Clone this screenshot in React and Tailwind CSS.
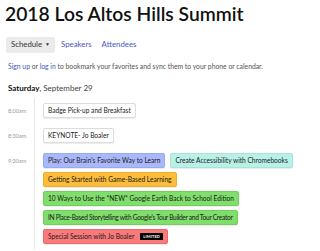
import React from 'react';

const slots = [
  { time: '8:00am', rows: [[{ title: 'Badge Pick-up and Breakfast', color: 'white' }]] },
  { time: '8:30am', rows: [[{ title: 'KEYNOTE- Jo Boaler', color: 'white' }]] },
  {
    time: '9:30am',
    rows: [
      [
        { title: "Play: Our Brain's Favorite Way to Learn", color: 'blue' },
        { title: 'Create Accessibility with Chromebooks', color: 'teal' },
      ],
      [{ title: 'Getting Started with Game-Based Learning', color: 'orange' }],
      [{ title: '10 Ways to Use the *NEW* Google Earth Back to School Edition', color: 'green' }],
      [{ title: "IN Place-Based Storytelling with Google's Tour Builder and Tour Creator", color: 'green', tight: true }],
      [{ title: 'Special Session with Jo Boaler', color: 'red', limited: true }],
    ],
  },
];

const colorClasses = {
  white: 'bg-white border-[#dcdcdc]',
  blue: 'bg-[#a9b8fb] border-[#9aaaf0]',
  teal: 'bg-[#baf1e6] border-[#a8e4d8]',
  orange: 'bg-[#fbbd3a] border-[#eeae2c]',
  green: 'bg-[#80de6c] border-[#70d05c]',
  red: 'bg-[#f97a7a] border-[#ea6a6a]',
};

const Card = ({ item }) => (
  <div
    className={`flex items-center h-[15px] px-[4px] rounded-[2px] border text-[6.6px] text-[#1a1a1a] whitespace-nowrap shadow-[0_1px_1px_rgba(0,0,0,0.08)] ${colorClasses[item.color]} ${item.tight ? 'tracking-[-0.3px]' : ''}`}
  >
    {item.title}
    {item.limited && (
      <span className="ml-[6px] bg-black text-white text-[4px] font-bold px-[3px] h-[7px] flex items-center tracking-wide">
        LIMITED
      </span>
    )}
  </div>
);

const Slot = ({ slot }) => (
  <div className="flex">
    <div className="w-[35px] shrink-0 border-r border-[#e6e6e6] pl-[8px] pt-[5px]">
      <div className="h-[15px] flex items-center text-[5.5px] text-[#999]">{slot.time}</div>
    </div>
    <div className="flex flex-col gap-[4px] pl-[8px] pt-[5px] pb-[5px]">
      {slot.rows.map((row, i) => (
        <div key={i} className="flex gap-[5px]">
          {row.map((item) => (
            <Card key={item.title} item={item} />
          ))}
        </div>
      ))}
    </div>
  </div>
);

export default function App() {
  return (
    <div className="w-[320px] h-[251px] bg-white overflow-hidden font-['Lato',sans-serif] text-[#111]">
      <h1 className="pl-[5px] pt-[1px] text-[19.3px] font-semibold leading-[25px]">
        2018 Los Altos Hills Summit
      </h1>

      <div className="flex items-center mt-[11px] pl-[6px] text-[7.8px]">
        <div className="flex items-center h-[16px] px-[5px] bg-[#ebebeb] rounded-[2px] text-[#333]">
          Schedule
          <span className="ml-[3px] text-[5px]">▼</span>
        </div>
        <span className="ml-[6px] text-[#4a56c4]">Speakers</span>
        <span className="ml-[10px] text-[#4a56c4]">Attendees</span>
      </div>

      <p className="pl-[8px] mt-[8px] text-[6.8px] text-[#555]">
        <span className="text-[#4a56c4]">Sign up</span> or <span className="text-[#4a56c4]">log in</span> to bookmark your favorites and sync them to your phone or calendar.
      </p>

      <p className="pl-[8px] mt-[11px] text-[8px] text-[#444]">
        <span className="font-bold text-[#111]">Saturday</span>, September 29
      </p>

      <div className="flex flex-col mt-[4px]">
        {slots.map((slot) => (
          <Slot key={slot.time} slot={slot} />
        ))}
      </div>
    </div>
  );
}
